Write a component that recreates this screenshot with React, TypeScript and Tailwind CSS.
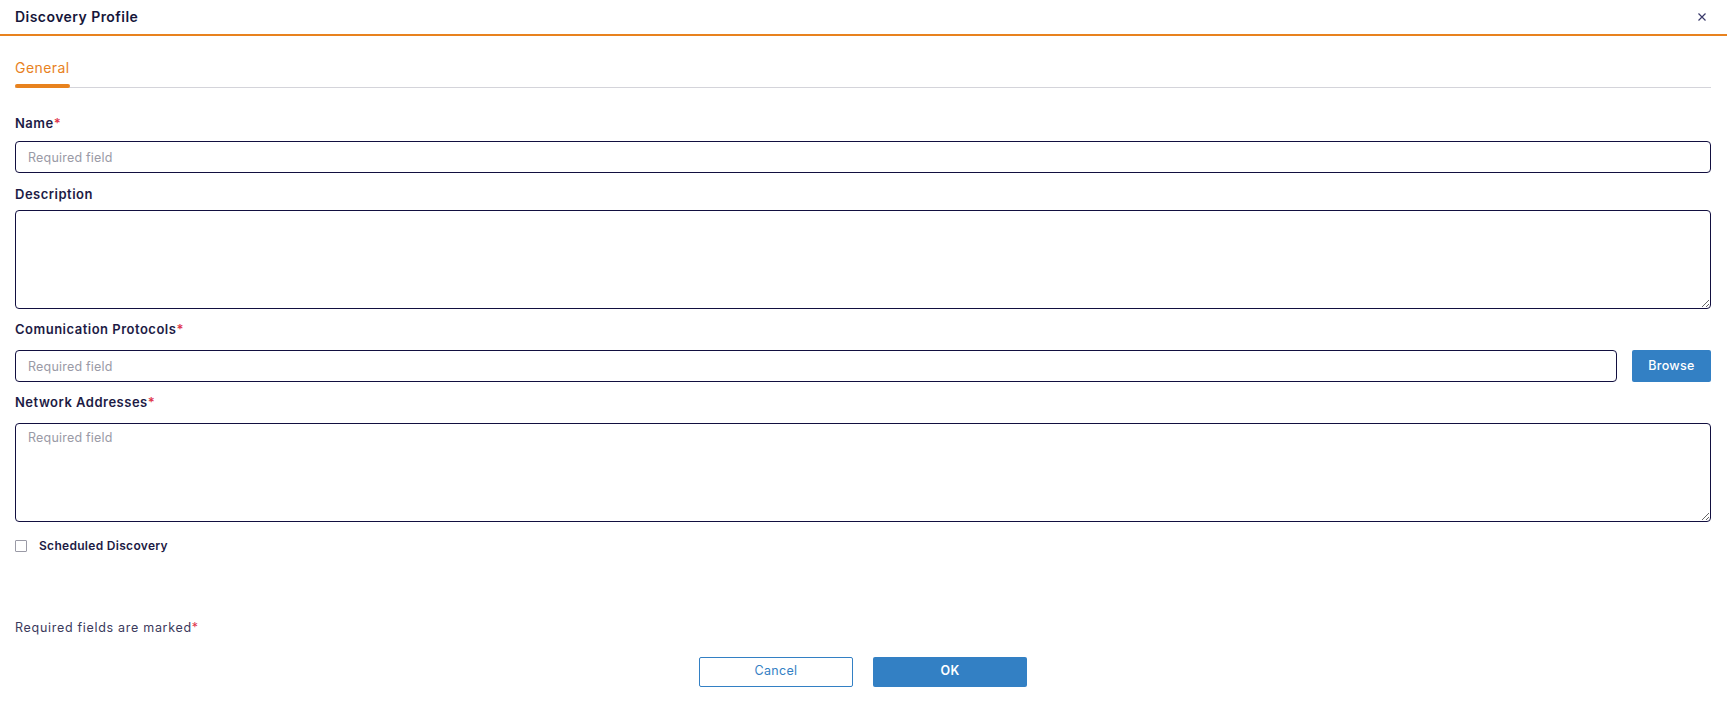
import React from "react";

const Req = () => <span className="text-[#e0364b]">*</span>;

const labelCls = "block text-[13px] font-semibold leading-none tracking-[0.5px] text-[#1d1b45]";
const fieldCls =
  "block w-full rounded-[4px] border border-[#120f40] px-[12px] text-[12.5px] tracking-[0.2px] text-[#1d1b45] placeholder:text-[#9a9aa6] outline-none bg-white";

export default function App() {
  return (
    <div className="w-[1727px] h-[717px] bg-white text-[#1d1b45] font-['Inter','Liberation_Sans',sans-serif] overflow-hidden">
      {/* Header */}
      <div className="h-[36px] border-b-2 border-[#e8821e] flex items-center justify-between pl-[15px] pr-[21px]">
        <h1 className="text-[14px] font-semibold text-[#16163a] leading-none tracking-[0.45px]">Discovery Profile</h1>
        <button className="text-[#3a3a6a] w-[9px] h-[9px] flex items-center justify-center">
          <svg width="8" height="8" viewBox="0 0 8 8" stroke="currentColor" strokeWidth="1.2">
            <path d="M0.5 0.5L7.5 7.5M7.5 0.5L0.5 7.5" />
          </svg>
        </button>
      </div>

      <div className="pl-[15px] pr-[16px]">
        {/* Tabs */}
        <div className="border-b border-[#d4d4da] h-[52px] flex items-end">
          <div className="relative h-full flex flex-col justify-end">
            <span className="text-[14px] text-[#e8821e] leading-none mb-[12px] tracking-[0.45px]">General</span>
            <div className="absolute bottom-[-1px] left-0 right-0 h-[4px] rounded-full bg-[#e8821e]" />
          </div>
        </div>

        {/* Name */}
        <label className={`${labelCls} mt-[29px]`}>
          Name<Req />
        </label>
        <input placeholder="Required field" className={`${fieldCls} mt-[11px] h-[32px]`} />

        {/* Description */}
        <label className={`${labelCls} mt-[15px]`}>Description</label>
        <textarea className={`${fieldCls} mt-[9px] h-[99px] py-[8px]`} />

        {/* Protocols */}
        <label className={`${labelCls} mt-[14px]`}>
          Comunication Protocols<Req />
        </label>
        <div className="mt-[14px] flex gap-[15px]">
          <input placeholder="Required field" className={`${fieldCls} flex-1 h-[32px]`} />
          <button className="w-[79px] h-[32px] shrink-0 rounded-[2px] bg-[#3380c4] text-white text-[12.5px] font-medium tracking-[0.3px]">
            Browse
          </button>
        </div>

        {/* Network */}
        <label className={`${labelCls} mt-[14px]`}>
          Network Addresses<Req />
        </label>
        <textarea placeholder="Required field" className={`${fieldCls} mt-[14px] h-[99px] py-[5px]`} />

        {/* Checkbox */}
        <div className="mt-[18px] flex items-center gap-[12px]">
          <span className="w-[12px] h-[12px] border border-[#9a9aa6] rounded-[1px] bg-white" />
          <span className="text-[12px] font-semibold leading-none tracking-[0.3px]">Scheduled Discovery</span>
        </div>

        <p className="mt-[70px] text-[12.5px] text-[#3b3a5c] leading-none tracking-[0.7px]">
          Required fields are marked<Req />
        </p>

        {/* Footer buttons */}
        <div className="mt-[22px] flex justify-center gap-[20px]">
          <button className="w-[154px] h-[30px] rounded-[2px] border border-[#3380c4] bg-white text-[#3380c4] text-[12.5px] tracking-[0.3px]">
            Cancel
          </button>
          <button className="w-[154px] h-[30px] rounded-[2px] bg-[#3380c4] text-white text-[12.5px] font-semibold tracking-[0.3px]">
            OK
          </button>
        </div>
      </div>
    </div>
  );
}
